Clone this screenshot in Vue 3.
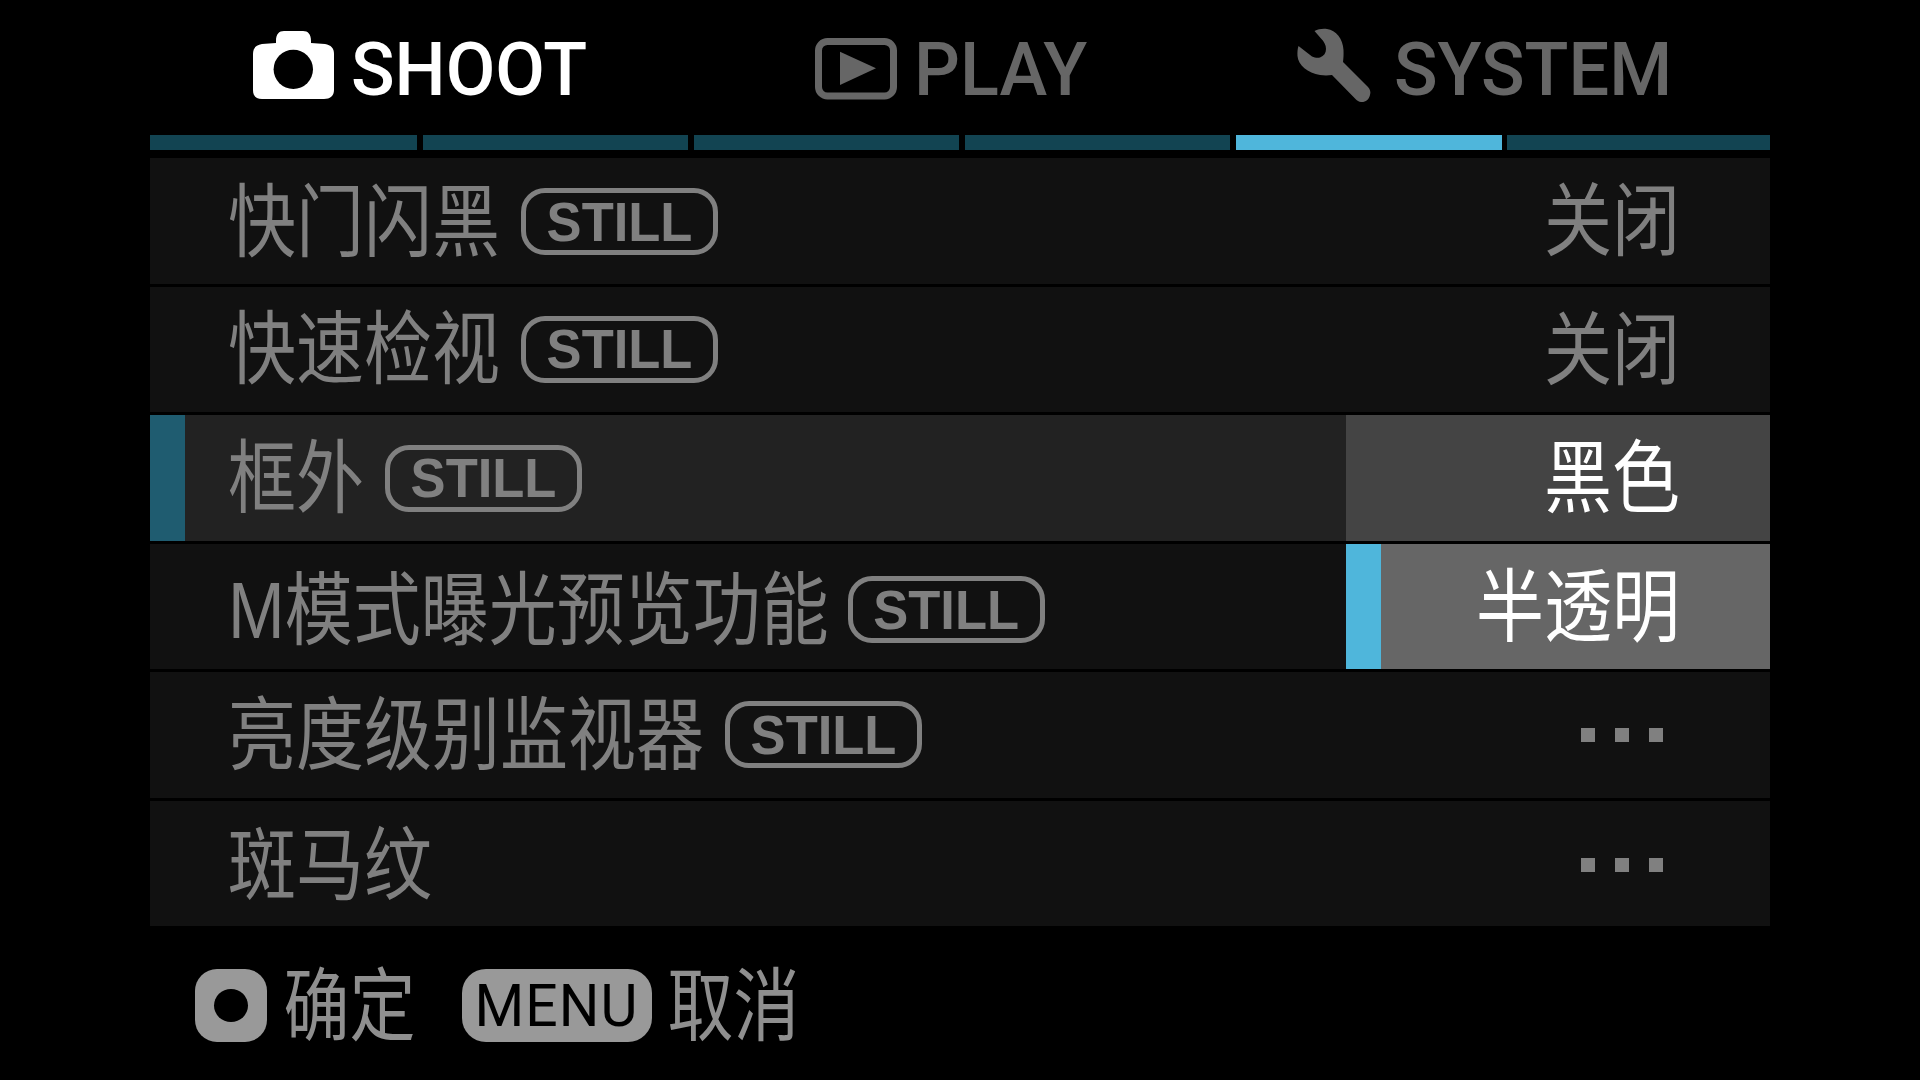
<script setup>
const segments = [0, 1, 2, 3, 4, 5]
const activeSegment = 4
const rows = [
  { label: '快门闪黑', still: true, value: '关闭' },
  { label: '快速检视', still: true, value: '关闭' },
  { label: '框外', still: true, value: '黑色', state: 'current' },
  { label: 'M模式曝光预览功能', still: true, value: '半透明', state: 'option' },
  { label: '亮度级别监视器', still: true, dots: true },
  { label: '斑马纹', still: false, dots: true }
]
</script>

<template>
  <div class="screen">
    <header class="tabs">
      <div class="tab on">
        <svg class="ico" viewBox="0 0 110 95" width="110" height="95">
          <path fill="#fff" d="M36 21C36 14 39 11 44 11H63C68 11 71 14 71 21V23L85 24C91 25 94 28 94 34V70C94 76 90 79 84 79H22C16 79 13 76 13 70V34C13 28 16 25 22 24L36 23Z" />
          <ellipse fill="#000" cx="53.3" cy="49.3" rx="19.7" ry="19.6" />
        </svg>
        <span class="tab-text">SHOOT</span>
      </div>
      <div class="tab">
        <svg class="ico" viewBox="0 0 110 95" width="110" height="95">
          <rect x="18.5" y="21.5" width="75" height="54.5" rx="9" fill="none" stroke="#666" stroke-width="7" />
          <path fill="#666" d="M40 31.7L76 48.3L40 65Z" />
        </svg>
        <span class="tab-text">PLAY</span>
      </div>
      <div class="tab">
        <svg class="ico" viewBox="0 0 110 95" width="110" height="95">
          <path fill="#666" d="M34.5 11C38 9 43 8.5 47 9C56 10 63 19 63.5 30C63.7 35 63.5 38 63 42L88 67C90 69 91 72 90 75C89 80 85 82.5 81 82C79 82 77 80.5 75 78.5L52 55C48 55.5 44 55.5 40 55C28 53 18 45 17.5 36C17.3 32 17.5 29 18.5 26L32 36.5C35 38 38 38 40 37.5C44 36 46 33 46 29C46 25 44 21.5 41 18.5Z" />
        </svg>
        <span class="tab-text">SYSTEM</span>
      </div>
    </header>

    <div class="segments">
      <i v-for="s in segments" :key="s" class="seg" :class="{ lit: s === activeSegment }"></i>
    </div>

    <main class="list">
      <div v-for="r in rows" :key="r.label" class="row" :class="r.state">
        <div class="label">
          <span class="txt">{{ r.label }}</span>
          <span v-if="r.still" class="still"><span class="still-text">STILL</span></span>
        </div>
        <div v-if="r.dots" class="dots"><i></i><i></i><i></i></div>
        <div v-else class="value"><span class="txt">{{ r.value }}</span></div>
      </div>
    </main>

    <footer class="foot">
      <div class="ok-btn"><i></i></div>
      <span class="txt foot-text">确定</span>
      <div class="menu-btn"><span class="menu-text">MENU</span></div>
      <span class="txt foot-text">取消</span>
    </footer>
  </div>
</template>

<style>
html, body { margin: 0; background: #000; }
</style>

<style scoped>
.screen {
  width: 1920px;
  height: 1080px;
  box-sizing: border-box;
  padding: 0 150px;
  background: #000;
  overflow: hidden;
  font-family: "Liberation Sans", "Noto Sans CJK SC", sans-serif;
  display: flex;
  flex-direction: column;
}
.tabs {
  height: 135px;
  flex: none;
  box-sizing: border-box;
  padding-left: 90px;
  display: grid;
  grid-template-columns: 560px 480px 1fr;
}
.tab {
  display: flex;
  align-items: center;
  color: #666;
}
.tab.on { color: #fff; }
.ico { flex: none; }
.tab-text {
  display: inline-block;
  font-family: Roboto, sans-serif;
  font-weight: 500;
  font-size: 72px;
  line-height: 1;
  margin-top: 4px;
  margin-left: 1px;
  transform: scaleY(1.03);
}
.tab:nth-child(n + 2) .tab-text { margin-left: 4px; }
.segments {
  height: 15px;
  flex: none;
  display: grid;
  grid-template-columns: 267px 265.5px 265.5px 265.5px 266px 1fr;
  gap: 5.5px;
  margin-bottom: 8px;
}
.seg { display: block; background: #124452; }
.seg.lit { background: #4fb6db; }
.list {
  height: 768px;
  flex: none;
  display: flex;
  flex-direction: column;
  gap: 3px;
}
.row {
  flex: 1;
  background: #111;
  display: flex;
  justify-content: space-between;
  align-items: stretch;
  color: #808080;
  font-size: 68px;
  line-height: 1;
}
.row:first-child .label { padding-top: 2px; }
.row:last-child .label,
.row:last-child .dots { padding-top: 3px; }
.row.current { background: #222; }
.label {
  padding-left: 78px;
  display: flex;
  align-items: center;
}
.row.current .label {
  padding-left: 43px;
  padding-top: 1px;
  border-left: 35px solid #1f5c70;
}
.row.option .label { padding-top: 7px; }
.row.option .still { margin-left: 19px; }
.txt {
  display: inline-block;
  transform: scaleY(1.17);
}
.still {
  box-sizing: border-box;
  width: 197px;
  height: 67px;
  margin-left: 21px;
  border: 5px solid #808080;
  border-radius: 24px;
  display: flex;
  align-items: center;
  justify-content: center;
}
.still-text {
  display: inline-block;
  font-weight: 700;
  font-size: 52.5px;
  line-height: 1;
  transform: scaleY(1.07);
}
.value {
  width: 424px;
  box-sizing: border-box;
  padding-right: 90px;
  padding-top: 1px;
  display: flex;
  align-items: center;
  justify-content: flex-end;
}
.row.current .value { background: #444; color: #fff; }
.row.option .value {
  background: #666;
  color: #fff;
  border-left: 35px solid #4fb6db;
}
.dots {
  padding-right: 107px;
  display: flex;
  align-items: center;
  gap: 20px;
}
.dots i { display: block; width: 14px; height: 14px; background: #808080; }
.foot {
  flex: 1;
  display: flex;
  align-items: center;
  padding-left: 44.5px;
  padding-top: 5px;
  color: #8f8f8f;
}
.foot-text { font-size: 66px; line-height: 1; transform: scaleY(1.2); }
.ok-btn {
  box-sizing: border-box;
  width: 72px;
  height: 73px;
  background: #999;
  border-radius: 22px;
  display: flex;
  align-items: center;
  justify-content: center;
  margin-right: 17px;
}
.ok-btn i { display: block; width: 34px; height: 33px; border-radius: 50%; background: #000; }
.menu-btn {
  box-sizing: border-box;
  width: 190px;
  height: 73px;
  margin: 0 16px 0 46px;
  background: #999;
  border-radius: 24px;
  color: #000;
  display: flex;
  align-items: center;
  justify-content: center;
}
.menu-text {
  display: inline-block;
  font-family: Roboto, sans-serif;
  font-size: 57px;
  letter-spacing: 1px;
  line-height: 1;
  transform: scaleY(1.03);
}
</style>
